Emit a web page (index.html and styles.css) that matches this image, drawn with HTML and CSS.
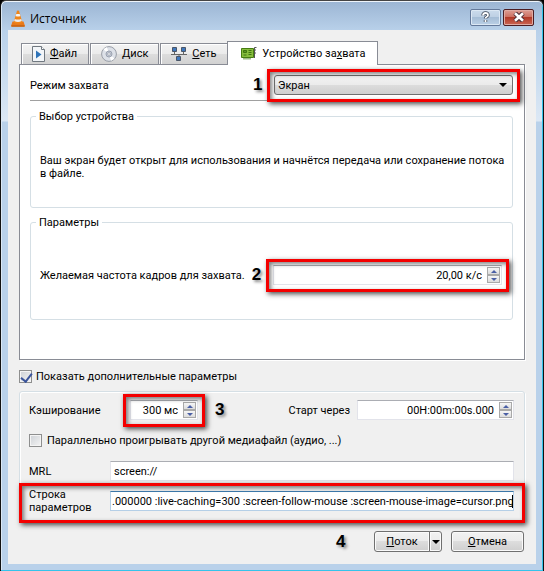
FILE: index.html
```html
<!DOCTYPE html>
<html lang="ru">

<head>
    <meta charset="UTF-8">
    <meta name="viewport" content="width=device-width, initial-scale=1.0">
    <title>Источник</title>
    <link rel="stylesheet" href="styles.css">
</head>

<body>
    <div class="window">
        <div class="titlebar">
            <svg class="cone" width="14" height="17" viewBox="0 0 14 17">
                <path d="M1.5 11.5h11l1.500 4.500q0 .8-1 .8H1q-1 0-1-.8z" fill="#e8791a"/>
                <path d="M6 .8q1-.8 2 0l3.400 11.700q-4.400 2.400-8.800 0z" fill="#f08519"/>
                <path d="M5.300 4h3.400l.7 2q-2.400 1-4.800 0z" fill="#f4f4f4"/>
                <path d="M3.800 9q3.200 1.200 6.400 0l.6 2q-3.800 1.800-7.600 0z" fill="#ececec"/>
                <path d="M.5 16h13" stroke="#b4560c" stroke-width="1"/>
            </svg>
            <h1>Источник</h1>
            <button class="sys help" type="button" aria-label="Справка">
                <svg width="9" height="12" viewBox="0 0 9 12">
                    <path d="M2 4.500Q2 2 4.500 2T7 4.200Q7 5.400 5.500 6Q4.500 6.400 4.500 7.600M4.500 9v2" fill="none" stroke="#3c4656" stroke-width="3.400"/>
                    <path d="M2 4.500Q2 2 4.500 2T7 4.200Q7 5.400 5.500 6Q4.500 6.400 4.500 7.600M4.500 9v2" fill="none" stroke="#fff" stroke-width="1.800"/>
                </svg>
            </button>
            <button class="sys close" type="button" aria-label="Закрыть">
                <svg width="12" height="10" viewBox="0 0 12 10">
                    <path d="M2 1l8 8M10 1L2 9" stroke="#4d3038" stroke-width="4.600"/>
                    <path d="M2 1.200l8 7.600M10 1.200L2 8.800" stroke="#fff" stroke-width="2.600"/>
                </svg>
            </button>
        </div>

        <form class="client">
            <div class="tabs" role="tablist">
                <button class="tab" type="button" role="tab">
                    <svg width="13" height="16" viewBox="0 0 13 16">
                        <path d="M.5.5h9l3 3v12H.5z" fill="#f2f5f8" stroke="#707880"/>
                        <path d="M9.5.5v3h3" fill="#fff" stroke="#707880"/>
                        <path d="M4 4.500l5.500 4-5.500 4z" fill="#2e73b8"/>
                    </svg>
                    <span><u>Ф</u>айл</span>
                </button>
                <button class="tab" type="button" role="tab">
                    <svg width="16" height="16" viewBox="0 0 16 16">
                        <circle cx="8" cy="8" r="7.400" fill="#dde1e8" stroke="#989da6"/>
                        <path d="M8 8L2.500 3.500A7 7 0 0 1 6 1.300zM8 8l5.500 4.500a7 7 0 0 1-3.500 2.200z" fill="#fff"/>
                        <circle cx="8" cy="8" r="3" fill="#c2c8d4" stroke="#9ba2b0"/>
                        <circle cx="8" cy="8" r="1.300" fill="#fff" stroke="#8a90a0" stroke-width=".6"/>
                    </svg>
                    <span><u>Д</u>иск</span>
                </button>
                <button class="tab" type="button" role="tab">
                    <svg width="16" height="15" viewBox="0 0 16 15">
                        <path d="M3.500 5v3M12.500 5v3M8 8v2M0 7.500h16" stroke="#666" fill="none"/>
                        <g fill="#3f78bd" stroke="#4b5668">
                            <path d="M1.500.5h4v4h-4zM10.500.5h4v4h-4zM5.500 9.500h4v4h-4z"/>
                        </g>
                    </svg>
                    <span><u>С</u>еть</span>
                </button>
                <button class="tab active" type="button" role="tab" aria-selected="true">
                    <svg width="16" height="13" viewBox="0 0 16 13">
                        <path d="M.5 1.500h12v9H.5z" fill="#86bd3c" stroke="#467c12"/>
                        <path d="M2.500 3.500h3v2h-3zM7.500 3.500h3" fill="#5c9622" stroke="#3f7410"/>
                        <path d="M2.500 8h3M7.500 5.500h3M7.500 7.500h3M3 11v1.500M5 11v1.500M7 11v1.500M9 11v1.500" stroke="#3f7410"/>
                        <path d="M15.500.5h-2v10.500M14 3h1M14 6h1" stroke="#555" fill="none"/>
                    </svg>
                    <span>Устройство за<u>х</u>вата</span>
                </button>
            </div>

            <div class="pane">
                <div class="row mode">
                    <label for="mode">Режим захвата</label>
                    <b class="step">1</b>
                    <div class="field marked">
                        <select id="mode">
                            <option>Экран</option>
                        </select>
                        <svg class="arrow" width="8" height="4" viewBox="0 0 8 4"><path d="M0 0h8L4 4z"/></svg>
                    </div>
                </div>
                <fieldset class="device">
                    <legend>Выбор устройства</legend>
                    <p>Ваш экран будет открыт для использования и начнётся передача или сохранение потока в файле.</p>
                </fieldset>
                <fieldset class="params">
                    <legend>Параметры</legend>
                    <div class="row">
                        <label for="fps">Желаемая частота кадров для захвата.</label>
                        <b class="step">2</b>
                        <div class="field spin marked">
                            <input id="fps" type="text" value="20,00 к/с">
                            <span class="arrows">
                                <button type="button" aria-label="Больше"></button>
                                <button type="button" class="down" aria-label="Меньше"></button>
                            </span>
                        </div>
                    </div>
                </fieldset>
            </div>

            <label class="check more"><input type="checkbox" checked>Показать дополнительные параметры</label>

            <div class="extra">
                <div class="row caching">
                    <label class="name" for="cache">Кэширование</label>
                    <div class="field spin marked short">
                        <input id="cache" type="text" value="300 мс">
                        <span class="arrows">
                            <button type="button" aria-label="Больше"></button>
                            <button type="button" class="down" aria-label="Меньше"></button>
                        </span>
                    </div>
                    <b class="step">3</b>
                    <label class="start" for="start">Старт через</label>
                    <div class="field spin time">
                        <input id="start" type="text" value="00H:00m:00s.000">
                        <span class="arrows">
                            <button type="button" aria-label="Больше"></button>
                            <button type="button" class="down" aria-label="Меньше"></button>
                        </span>
                    </div>
                </div>
                <label class="check"><input type="checkbox">Параллельно проигрывать другой медиафайл (аудио, ...)</label>
                <div class="row mrl">
                    <label class="name" for="mrl">MRL</label>
                    <div class="field"><input id="mrl" type="text" value="screen://"></div>
                </div>
                <div class="row options marked">
                    <label class="name" for="options">Строка параметров</label>
                    <div class="field focus">
                        <input id="options" type="text" value=".000000 :live-caching=300 :screen-follow-mouse :screen-mouse-image=cursor.png">
                    </div>
                </div>
            </div>

            <div class="buttons">
                <b class="step">4</b>
                <div class="split">
                    <button class="btn" type="button"><u>П</u>оток</button>
                    <button class="btn drop" type="button" aria-label="Ещё">
                        <svg width="8" height="4" viewBox="0 0 8 4"><path d="M0 0h8L4 4z"/></svg>
                    </button>
                </div>
                <button class="btn cancel" type="button"><u>О</u>тмена</button>
            </div>
        </form>
    </div>
</body>

</html>
```

FILE: styles.css
```css
* {
    box-sizing: border-box;
    margin: 0;
    padding: 0;
}

body {
    background: #000;
    color: #000;
    font: 11px/13px Roboto, "DejaVu Sans Condensed", sans-serif;
}

button,
input,
select {
    font: inherit;
    color: inherit;
}

svg {
    display: block;
    flex: none;
}

.window {
    display: flex;
    flex-direction: column;
    min-height: 100vh;
    padding: 0 7px 7px;
    border: 1px solid #111;
    border-top-color: #444;
    border-radius: 6px 6px 0 0;
    background: linear-gradient(#9bb5d3, #b9d1ea 30px, #cfe0f1 90px, #dce8f5 120px, #b9d1ea 121px);
    box-shadow: inset 0 1px #eef4fa, inset -1px -1px #35c3ea, inset 1px 0 #dbe8f5;
}

.titlebar {
    display: flex;
    align-items: center;
    height: 29px;
    padding: 6px 2px 0 3px;
}

.titlebar h1 {
    flex: 1;
    margin-left: 5px;
    font: 12px/16px "Open Sans", sans-serif;
}

.sys {
    display: flex;
    align-items: center;
    justify-content: center;
    width: 31px;
    height: 17px;
    margin: 0 0 3px 2px;
    border: 1px solid #64799a;
    border-radius: 2px;
    background: linear-gradient(#cbdbec, #bccfe3 50%, #a5bdd6 50%, #bbd0e6);
    box-shadow: inset 0 0 0 1px #dce8f4;
}

.sys.close {
    border-color: #4c1d22;
    background: linear-gradient(#dd9e94, #cc6d5e 50%, #b23a28 50%, #cb6654);
    box-shadow: inset 0 0 0 1px #e0aaa2;
}

.client {
    flex: 1;
    padding: 11px 11px 12px;
    background: #f0f0f0;
}

.tabs {
    display: flex;
    align-items: flex-end;
    padding-left: 2px;
    line-height: 16px;
}

.tab {
    display: flex;
    align-items: center;
    gap: 5px;
    height: 21px;
    min-width: 68px;
    padding: 0 10px;
    margin-right: 1px;
    border: 1px solid #898c95;
    border-bottom: 0;
    background: linear-gradient(#f3f3f3, #ebebeb 50%, #dddddd 50%, #d2d2d2);
    box-shadow: inset 1px 1px #fff;
}

.tab.active {
    z-index: 1;
    height: 24px;
    padding: 0 11px 0 13px;
    margin: 0 0 -1px -2px;
    background: #fff;
}

.pane {
    padding: 10px 11px 39px 10px;
    border: 1px solid #898c95;
    background: #fff;
    box-shadow: 1px 1px #fff;
}

.row {
    display: flex;
    align-items: center;
}

.mode {
    padding-bottom: 5px;
    border-bottom: 1px solid #a0a0a0;
}

.mode label {
    flex: 1;
}

.step {
    width: 21px;
    font: bold 17px/20px "Liberation Sans", Arial, sans-serif;
    text-shadow: 2px 2px 3px #888;
}

.field {
    position: relative;
    flex: 1;
    height: 20px;
}

.mode .field {
    flex: none;
    width: 239px;
}

.marked {
    position: relative;
}

/* red frame round the fields to fill in */
.marked::after {
    content: "";
    position: absolute;
    inset: -6px -7px -7px;
    border: 3px solid #f40000;
    box-shadow: 2px 2px 5px rgba(0, 0, 0, .7), inset 2px 2px 4px rgba(0, 0, 0, .5);
    pointer-events: none;
}

select {
    width: 100%;
    height: 20px;
    padding: 0 3px;
    appearance: none;
    border: 1px solid #707070;
    border-radius: 3px;
    background: linear-gradient(#f2f2f2, #ebebeb 50%, #dddddd 50%, #cfcfcf);
}

.arrow {
    position: absolute;
    top: 8px;
    right: 6px;
    pointer-events: none;
}

fieldset {
    border: 1px solid #d5dfe5;
    border-radius: 3px;
}

legend {
    margin-left: -4px;
    padding: 0 3px;
}

.device {
    margin-top: 9px;
    padding: 31px 4px 27px 9px;
}

.params {
    margin-top: 8px;
    padding: 36px 10px 34px 9px;
}

.params .step {
    margin-left: 7px;
}

.field input {
    width: 100%;
    height: 100%;
    padding: 0 3px;
    border: 1px solid #e2e3ea;
    border-top-color: #abadb3;
    outline: 0;
    background: #fff;
}

.spin input {
    padding-right: 19px;
    text-align: right;
}

.arrows {
    position: absolute;
    top: 2px;
    right: 2px;
    display: flex;
    flex-direction: column;
    width: 13px;
}

.arrows button {
    display: flex;
    align-items: center;
    justify-content: center;
    height: 8px;
    border: 1px solid #a9a9a9;
    background: linear-gradient(#f6f6f6, #dcdcdc);
}

.arrows button::before {
    content: "";
    border: 3px solid transparent;
    border-top: 0;
    border-bottom: 3px solid #4a5fa5;
}

.arrows .down::before {
    border-top: 3px solid #4a5fa5;
    border-bottom: 0;
}

.check {
    display: flex;
    align-items: center;
    gap: 4px;
}

.check input {
    width: 13px;
    height: 13px;
    appearance: none;
    border: 1px solid #8e8f8f;
    background: linear-gradient(135deg, #cdd1d6, #f4f4f4);
    box-shadow: inset 0 0 0 1px #f4f4f4;
}

.check input:checked::after {
    content: "";
    display: block;
    width: 5px;
    height: 9px;
    margin-left: 3px;
    border: solid #3b559b;
    border-width: 0 2px 2px 0;
    transform: rotate(38deg);
}

.more {
    margin: 10px 0 8px;
}

.extra {
    padding: 8px 10px 7px 9px;
    border: 1px solid #d5dfe5;
    border-radius: 3px;
    box-shadow: inset 1px 1px #fff, 1px 1px #fff;
}

.name {
    width: 81px;
}

.caching .name {
    width: 101px;
}

.short {
    flex: none;
    width: 68px;
}

.caching .step {
    margin-left: 17px;
}

.start {
    flex: 1;
    padding-right: 7px;
    text-align: right;
}

.time {
    flex: none;
    width: 157px;
}

.extra .check {
    gap: 5px;
    margin: 14px 0;
}

.options {
    margin-top: 7px;
}

.options::after {
    inset: -5px -11px -9px -10px;
}

.focus input {
    padding: 0 1px;
    border-color: #b5cfe7;
    border-top-color: #3d7bad;
    text-align: right;
}

/* text cursor after the last letter */
.focus::after {
    content: "";
    position: absolute;
    top: 4px;
    right: 1px;
    width: 1px;
    height: 13px;
    background: #000;
}

.buttons {
    display: flex;
    align-items: center;
    justify-content: flex-end;
    margin-top: 9px;
    padding-right: 1px;
}

.buttons .step {
    width: 38px;
}

.split {
    display: flex;
    margin-right: 9px;
}

.btn {
    height: 21px;
    border: 1px solid #707070;
    border-radius: 3px;
    background: linear-gradient(#f2f2f2, #ebebeb 50%, #dddddd 50%, #cfcfcf);
    box-shadow: inset 0 0 0 1px #fafafa;
}

.split .btn {
    width: 56px;
    border-radius: 3px 0 0 3px;
}

.split .drop {
    display: flex;
    align-items: center;
    justify-content: center;
    width: 13px;
    margin-left: -1px;
    border-radius: 0 3px 3px 0;
}

.cancel {
    width: 73px;
}
```
